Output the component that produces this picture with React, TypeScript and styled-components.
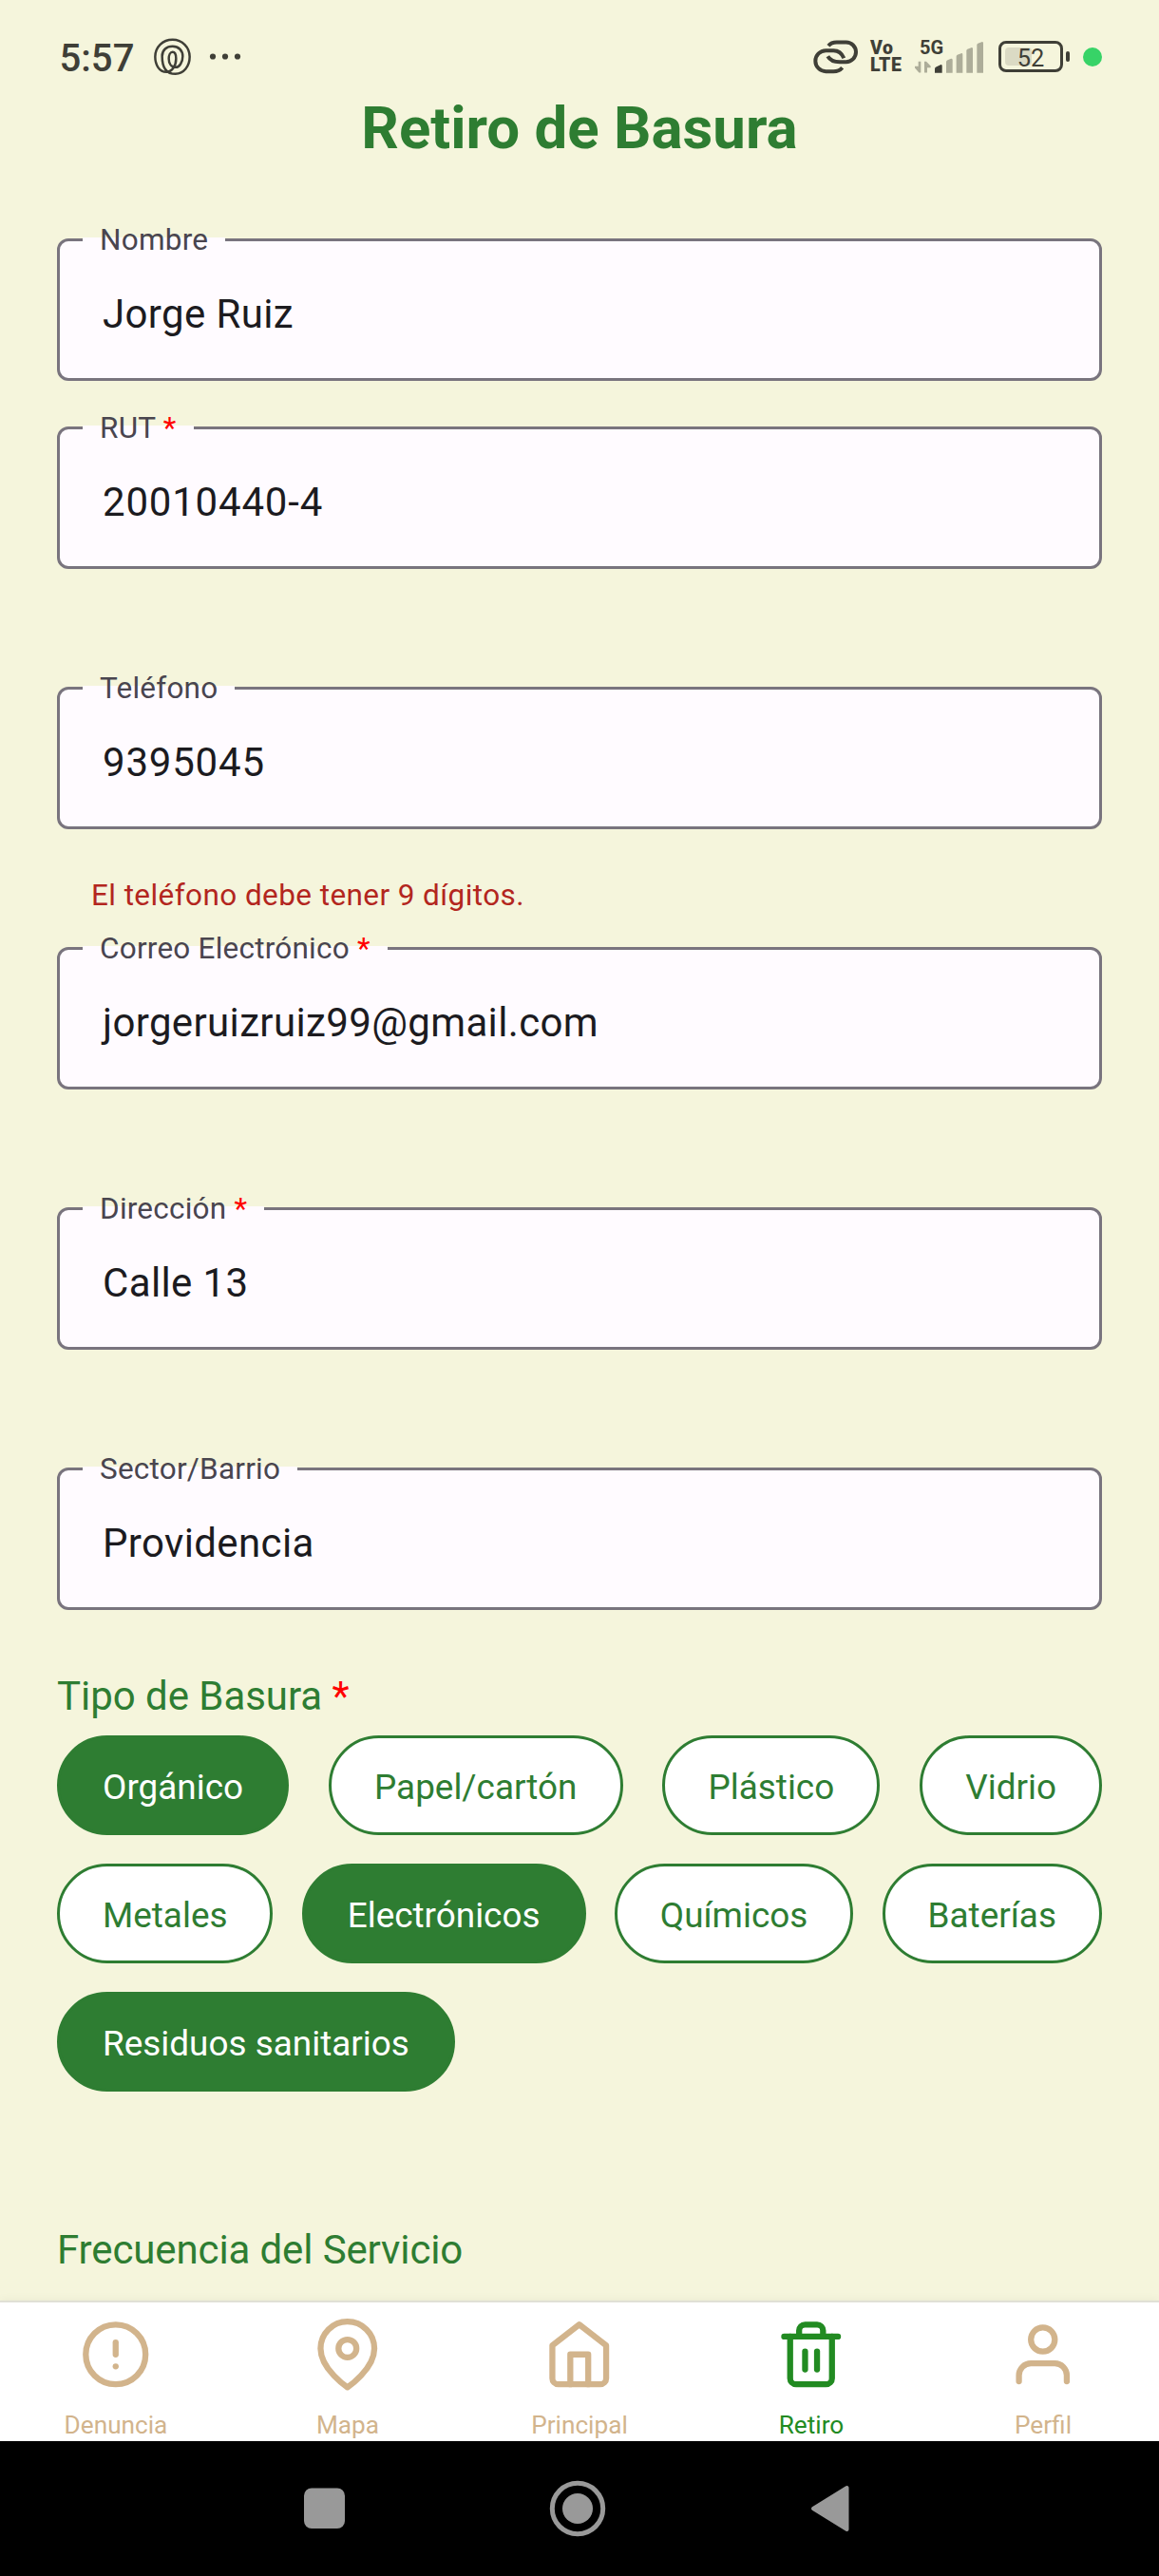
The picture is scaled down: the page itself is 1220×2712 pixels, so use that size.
import React from 'react';
import styled, { createGlobalStyle, css } from 'styled-components';
import { FiAlertCircle, FiHome, FiMapPin, FiTrash2, FiUser } from 'react-icons/fi';

const color = {
  page: '#f5f5dc',
  surface: '#fffbff',
  primary: '#2e7d32',
  active: '#228b22',
  inactive: '#d2b48c',
  outline: '#79747e',
  label: '#49454f',
  text: '#1c1b1f',
  error: '#b3261e',
  required: '#ff0000',
  status: '#3f3f37',
  statusFaint: '#adad99',
};

const GlobalStyle = createGlobalStyle`
  * { box-sizing: border-box; }
  body {
    margin: 0;
    background: ${color.page};
    font-family: Roboto, "Liberation Sans", sans-serif;
  }
`;

const Screen = styled.div`
  display: flex;
  flex-direction: column;
  width: 1220px;
  height: 2712px;
  overflow: hidden;
  background: ${color.page};
`;

/* ---------- status bar ---------- */

const StatusBar = styled.header`
  display: flex;
  align-items: center;
  flex: none;
  height: 99px;
  padding: 20px 60px 0 62.5px;
  color: ${color.status};
`;

const Clock = styled.span`
  padding-top: 5px;
  font-size: 40.1px;
  font-weight: 500;
  line-height: 48px;
`;

const Swirl = styled.svg`
  width: 44px;
  height: 40px;
  margin-left: 18.5px;
`;

const Dots = styled.svg`
  width: 34px;
  height: 40px;
  margin-left: 16px;
`;

const StatusRight = styled.div`
  display: flex;
  align-items: center;
  margin-left: auto;
`;

const LinkGlyph = styled.svg`
  width: 49px;
  height: 40px;
`;

const Volte = styled.div`
  display: flex;
  flex-direction: column;
  width: 46px;
  margin-left: 12px;
  font-size: 19.5px;
  font-weight: 900;
  letter-spacing: 0.5px;
  line-height: 18px;
`;

const Signal = styled.div`
  position: relative;
  width: 74px;
  height: 40px;
`;

const SignalBars = styled.svg`
  display: block;
  width: 74px;
  height: 40px;
`;

const Network = styled.span`
  position: absolute;
  left: 6px;
  top: 0;
  font-size: 20px;
  font-weight: 700;
  line-height: 20px;
`;

const Battery = styled.div`
  position: relative;
  display: flex;
  align-items: center;
  justify-content: center;
  width: 68px;
  height: 33px;
  margin-left: 15px;
  padding-top: 3px;
  border: 3px solid ${color.status};
  border-radius: 8px;
  font-size: 25.4px;
  line-height: 28px;
`;

const BatteryFill = styled.span`
  position: absolute;
  left: 4px;
  top: 4px;
  width: 28px;
  height: 19px;
  border-radius: 4px;
  background: #dbdac4;
`;

const BatteryValue = styled.span`
  position: relative;
`;

const BatteryTip = styled.span`
  width: 4px;
  height: 11px;
  margin-left: 3px;
  border-radius: 2px;
  background: ${color.status};
`;

const PrivacyDot = styled.span`
  width: 20px;
  height: 20px;
  margin-left: 14px;
  border-radius: 50%;
  background: #37d367;
`;

/* ---------- form ---------- */

const Content = styled.main`
  display: flex;
  flex-direction: column;
  flex: 1;
  min-height: 0;
  overflow: hidden;
  padding: 0 60px;
`;

const Title = styled.h1`
  margin: 0 0 80px;
  color: ${color.primary};
  font-size: 61.8px;
  font-weight: 700;
  line-height: 72px;
  text-align: center;
`;

const Field = styled.div`
  position: relative;
  display: flex;
  align-items: center;
  flex: none;
  height: 150px;
  padding: 10px 45px 0;
  border: 3px solid ${color.outline};
  border-radius: 12px;
  background: ${color.surface};
`;

const FieldLabel = styled.label`
  position: absolute;
  left: 24px;
  top: -20px;
  padding: 0 18px;
  background: linear-gradient(transparent 16px, ${color.surface} 16px);
  color: ${color.label};
  font-size: 31.5px;
  letter-spacing: 0.22px;
  line-height: 38px;
  white-space: pre;
`;

const FieldValue = styled.span<{ $numeric: boolean }>`
  color: ${color.text};
  font-size: 42px;
  letter-spacing: ${({ $numeric }) => ($numeric ? '0.8px' : '0.36px')};
  line-height: 50px;
`;

const Required = styled.span`
  color: ${color.required};
`;

const Helper = styled.div<{ $collapsed: boolean }>`
  flex: none;
  height: ${({ $collapsed }) => ($collapsed ? 48 : 124)}px;
  padding: ${({ $collapsed }) => ($collapsed ? '0' : '51px 36px 0')};
  color: ${color.error};
  font-size: 31.5px;
  letter-spacing: 0.42px;
  line-height: 38px;
`;

const SectionTitle = styled.h2<{ $tight?: boolean }>`
  flex: none;
  margin: 0;
  color: ${color.primary};
  font-size: 42px;
  font-weight: 400;
  letter-spacing: ${({ $tight }) => ($tight ? '-0.12px' : '-0.04px')};
  line-height: 50px;
  white-space: pre;
`;

const WasteSection = styled.section`
  display: flex;
  flex-direction: column;
  gap: 16px;
  flex: none;
  margin: 66px 0 142px;
`;

const Chips = styled.div`
  display: flex;
  flex-wrap: wrap;
  justify-content: space-between;
  gap: 30px 24px;
`;

const Chip = styled.button<{ $selected: boolean }>`
  height: 105px;
  padding: 4px 45px 0;
  border: 3px solid ${color.primary};
  border-radius: 53px;
  background: #ffffff;
  color: ${color.primary};
  font-family: inherit;
  font-size: 36.9px;
  line-height: 44px;
  ${({ $selected }) =>
    $selected &&
    css`
      background: ${color.primary};
      color: #ffffff;
    `}
`;

/* ---------- bottom bars ---------- */

const TabBar = styled.nav`
  display: flex;
  flex: none;
  height: 148px;
  border-top: 2px solid #e0e0d6;
  background: #ffffff;
  box-shadow: 0 0 10px rgba(0, 0, 0, 0.06);
`;

const Tab = styled.a<{ $active: boolean }>`
  display: flex;
  flex-direction: column;
  align-items: center;
  flex: 1;
  gap: 19px;
  padding-top: 17px;
  color: ${({ $active }) => ($active ? color.active : color.inactive)};
  font-size: 26.2px;
  line-height: 34px;

  svg {
    flex: none;
    width: 75.5px;
    height: 75.5px;
  }
`;

const SystemNav = styled.footer`
  display: flex;
  align-items: center;
  justify-content: center;
  flex: none;
  gap: 206px;
  height: 142px;
  padding-right: 5px;
  background: #000000;
`;

const SystemIcon = styled.svg`
  width: 60px;
  height: 60px;
`;

type FieldData = {
  label: string;
  value: string;
  required?: boolean;
  numeric?: boolean;
  collapsed?: boolean;
  error?: string;
};

const fields: FieldData[] = [
  { label: 'Nombre', value: 'Jorge Ruiz', collapsed: true },
  { label: 'RUT', value: '20010440-4', required: true, numeric: true },
  { label: 'Teléfono', value: '9395045', numeric: true, error: 'El teléfono debe tener 9 dígitos.' },
  { label: 'Correo Electrónico', value: 'jorgeruizruiz99@gmail.com', required: true },
  { label: 'Dirección', value: 'Calle 13', required: true },
  { label: 'Sector/Barrio', value: 'Providencia' },
];

const wasteTypes = [
  { name: 'Orgánico', selected: true },
  { name: 'Papel/cartón', selected: false },
  { name: 'Plástico', selected: false },
  { name: 'Vidrio', selected: false },
  { name: 'Metales', selected: false },
  { name: 'Electrónicos', selected: true },
  { name: 'Químicos', selected: false },
  { name: 'Baterías', selected: false },
  { name: 'Residuos sanitarios', selected: true },
];

const tabs = [
  { name: 'Denuncia', Icon: FiAlertCircle },
  { name: 'Mapa', Icon: FiMapPin },
  { name: 'Principal', Icon: FiHome },
  { name: 'Retiro', Icon: FiTrash2 },
  { name: 'Perfil', Icon: FiUser },
];

function Status() {
  return (
    <StatusBar>
      <Clock>5:57</Clock>
      <Swirl viewBox="30 28.5 132 120" fill="none" stroke="currentColor" strokeWidth="7.4">
        <path d="M104 142C70 142 62 112 62 86C62 66 76 55 95 55C114 55 127 68 127 86C127 106 116 121 105 121C90 121 83 108 83 94C83 82 88 73 95 73C102 73 106 82 106 94C106 118 92 136 76 136C52 136 40 112 40 88C40 57 64 34 95 34C126 34 149 58 149 88C149 118 130 142 104 142Z" />
      </Swirl>
      <Dots viewBox="0 0 34 40" fill="currentColor">
        <circle cx="4" cy="19.5" r="3.1" />
        <circle cx="17" cy="19.5" r="3.1" />
        <circle cx="30" cy="19.5" r="3.1" />
      </Dots>
      <StatusRight>
        <LinkGlyph viewBox="15 28.5 147 120" fill="none" stroke="currentColor" strokeWidth="12">
          <path d="M66 53Q75 42 92 42H122A31 31 0 0 1 122 104H102Q74 104 64 86" />
          <path d="M115 92Q105 68 82 68H58A33 33 0 0 0 58 134H82Q100 134 110 122" />
        </LinkGlyph>
        <Volte>
          <span>Vo</span>
          <span>LTE</span>
        </Volte>
        <Signal>
          <SignalBars viewBox="336 28.5 222 120">
            <g fill={color.statusFaint}>
              <path d="M350 103h8v35h-6l-13-15v-5h11z" />
              <path d="M369 138v-35h6l14 14v5h-11v16z" />
              <path d="M438 139V104q0-3 3-5l12-5q5-1 5 4v41z" />
              <path d="M470 139V87q0-3 3-5l12-5q5-1 5 4v58z" />
              <path d="M502 139V69q0-3 3-5l12-5q5-1 5 4v76z" />
              <path d="M535 139V51q0-3 3-5l12-5q5-1 5 4v94z" />
            </g>
            <path d="M402 139V126q0-4 4-6l14-7q5-1 5 4v22z" fill="currentColor" />
          </SignalBars>
          <Network>5G</Network>
        </Signal>
        <Battery>
          <BatteryFill />
          <BatteryValue>52</BatteryValue>
        </Battery>
        <BatteryTip />
        <PrivacyDot />
      </StatusRight>
    </StatusBar>
  );
}

export default function App() {
  return (
    <Screen>
      <GlobalStyle />
      <Status />
      <Content>
        <Title>Retiro de Basura</Title>
        {fields.map((field, index) => (
          <React.Fragment key={field.label}>
            <Field>
              <FieldLabel>
                {field.label}
                {field.required && <Required> *</Required>}
              </FieldLabel>
              <FieldValue $numeric={!!field.numeric}>{field.value}</FieldValue>
            </Field>
            {index < fields.length - 1 && (
              <Helper $collapsed={!!field.collapsed}>{field.error}</Helper>
            )}
          </React.Fragment>
        ))}
        <WasteSection>
          <SectionTitle>
            Tipo de Basura<Required> *</Required>
          </SectionTitle>
          <Chips>
            {wasteTypes.map((type) => (
              <Chip key={type.name} $selected={type.selected}>
                {type.name}
              </Chip>
            ))}
          </Chips>
        </WasteSection>
        <SectionTitle $tight>Frecuencia del Servicio</SectionTitle>
      </Content>
      <TabBar>
        {tabs.map(({ name, Icon }) => (
          <Tab key={name} $active={name === 'Retiro'}>
            <Icon />
            {name}
          </Tab>
        ))}
      </TabBar>
      <SystemNav>
        <SystemIcon viewBox="0 0 60 60" fill="#999999">
          <rect x="8" y="8.5" width="43" height="42.5" rx="8" />
        </SystemIcon>
        <SystemIcon viewBox="0 0 60 60">
          <circle cx="30" cy="30" r="26.7" fill="none" stroke="#999999" strokeWidth="5" />
          <circle cx="30" cy="30" r="16" fill="#999999" />
        </SystemIcon>
        <SystemIcon viewBox="0 0 60 60" fill="#999999" stroke="#999999" strokeWidth="4" strokeLinejoin="round">
          <path d="M12 30L47.5 8V52Z" />
        </SystemIcon>
      </SystemNav>
    </Screen>
  );
}
